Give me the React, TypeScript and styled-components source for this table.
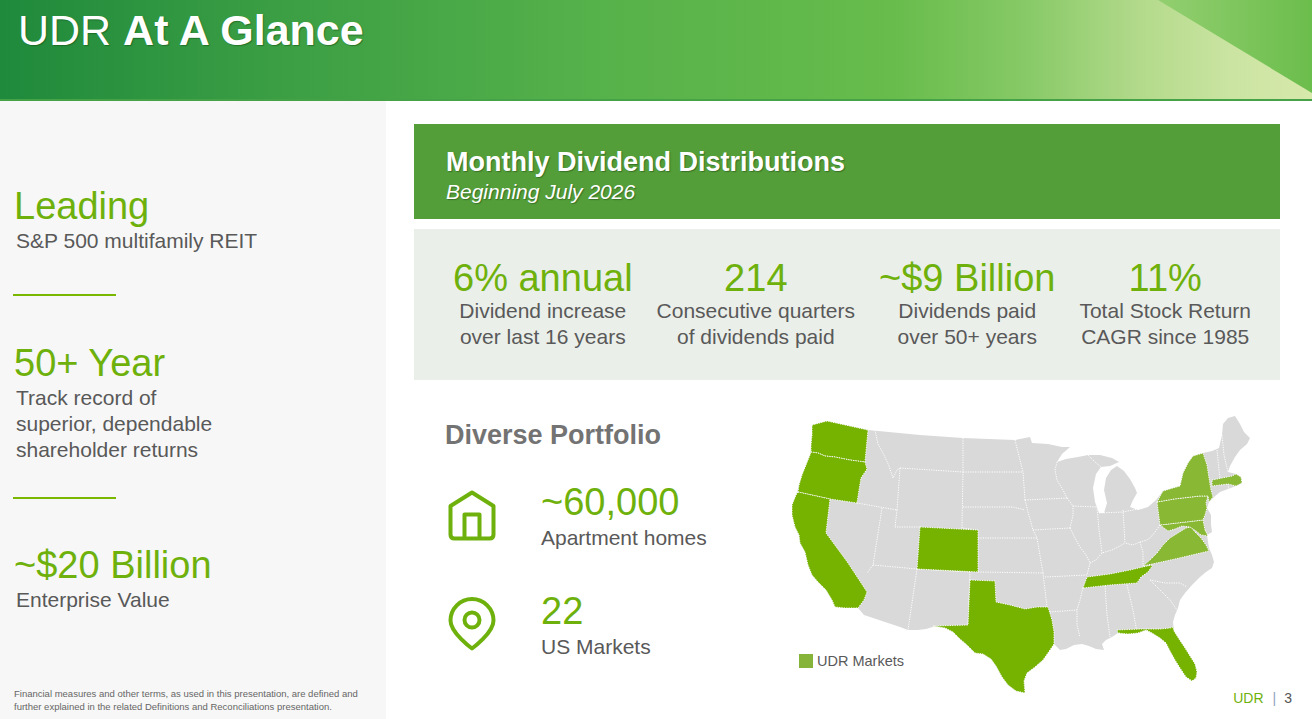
import React from "react";
import styled, { createGlobalStyle } from "styled-components";

const GlobalStyle = createGlobalStyle`
  html, body {
    margin: 0;
    padding: 0;
    background: #ffffff;
  }
  body {
    font-family: "Liberation Sans", Arial, sans-serif;
  }
`;

const GREEN = "#6fb10c";
const GRAY = "#595959";

const stats = [
  { value: "6% annual", lines: ["Dividend increase", "over last 16 years"] },
  { value: "214", lines: ["Consecutive quarters", "of dividends paid"] },
  { value: "~$9 Billion", lines: ["Dividends paid", "over 50+ years"] },
  { value: "11%", lines: ["Total Stock Return", "CAGR since 1985"] },
];

// rough outline of the lower 48, screen coords
const US_OUTLINE =
  "812,425 827,421 868,430 920,435 963,438 1015,440 1030,437 1032,443 1048,444 1062,447 1070,447 1062,454 1057,462 1066,459 1078,457 1088,455 1100,455 1112,458 1119,462 1110,466 1101,467 1096,474 1093,488 1095,502 1099,513 1104,513 1107,503 1104,490 1106,478 1111,470 1117,466 1124,471 1130,479 1135,488 1137,493 1133,500 1130,507 1138,510 1148,507 1156,500 1163,491 1173,488 1180,486 1183,473 1188,463 1193,456 1203,453 1212,451 1219,448 1222,435 1223,424 1228,418 1235,416 1240,424 1244,432 1250,438 1247,444 1240,450 1235,457 1230,466 1228,472 1236,474 1241,477 1242,483 1236,486 1228,489 1220,492 1214,497 1209,502 1207,508 1211,515 1211,525 1212,532 1207,535 1208,542 1209,548 1212,555 1214,562 1212,568 1206,572 1200,577 1192,585 1185,593 1180,600 1178,608 1175,615 1173,622 1174,631 1179,639 1185,648 1190,656 1195,664 1197,672 1196,678 1192,681 1186,677 1180,668 1175,660 1170,651 1166,643 1160,638 1152,633 1146,630 1138,633 1128,634 1118,633 1112,637 1106,640 1102,644 1104,650 1096,649 1089,646 1082,644 1074,645 1066,649 1060,650 1054,644 1050,650 1043,660 1035,667 1027,673 1024,681 1025,693 1016,691 1008,685 1002,677 996,666 991,659 983,654 975,653 967,645 960,639 953,632 945,628 936,626 926,629 918,630 908,630 900,627 888,623 876,619 864,615 858,608 845,608 835,607 832,600 826,590 818,582 812,575 808,565 805,552 800,543 799,535 795,527 792,515 792,505 796,495 799,485 802,475 806,465 810,455 811,445 812,435";

const MARKETS_DARK = [
  // WA
  "812,425 827,421 868,430 865,462 850,460 835,457 825,456 818,453 811,452 811,445 812,435",
  // OR
  "811,452 818,453 825,456 835,457 850,460 865,462 867,469 861,478 859,490 857,503 830,499 798,492 799,485 802,475 806,465 810,455",
  // CA
  "798,492 830,499 826,533 848,563 867,592 864,600 858,608 845,608 835,607 832,600 826,590 818,582 812,575 808,565 805,552 800,543 799,535 795,527 792,515 792,505 796,495",
  // CO
  "920,527 978,530 978,572 917,569",
  // TX
  "970,580 995,581 996,602 1010,605 1025,609 1037,607 1048,607 1052,620 1054,632 1054,644 1050,650 1043,660 1035,667 1027,673 1024,681 1025,693 1016,691 1008,685 1002,677 996,666 991,659 983,654 975,653 967,645 960,639 953,632 945,628 933,626 968,625",
  // TN
  "1083,588 1087,577 1110,574 1130,570 1147,566 1153,565 1148,572 1141,577 1137,583 1110,585",
  // FL
  "1117,630 1140,629 1160,629 1170,628 1173,627 1174,631 1179,639 1185,648 1190,656 1195,664 1197,672 1196,678 1192,681 1186,677 1180,668 1175,660 1170,651 1166,643 1160,638 1152,633 1146,630 1138,633 1128,634 1118,633",
];

const MARKETS_LIGHT = [
  // VA
  "1143,566 1150,560 1157,553 1163,545 1170,538 1178,533 1186,528 1191,527 1195,532 1201,538 1206,545 1209,551 1175,559",
  // MD
  "1160,525 1203,520 1205,530 1208,536 1201,535 1196,531 1190,527 1182,526 1175,529 1168,531",
  // PA
  "1157,502 1174,499 1200,496 1208,496 1206,503 1207,508 1205,515 1203,520 1160,525",
  // NY
  "1157,502 1163,491 1173,488 1180,486 1183,473 1188,463 1193,456 1203,453 1207,465 1209,478 1211,490 1213,497 1209,502 1208,496 1200,496 1174,499",
  // MA
  "1212,480 1232,476 1236,474 1241,477 1242,483 1236,486 1228,484 1212,486",
];

const BORDERS = [
  "875,430 878,444 884,455 889,466 893,478 897,470 900,468",
  "900,468 963,472",
  "900,468 897,510",
  "857,503 897,510",
  "882,508 873,565 867,573",
  "897,510 895,527 920,527",
  "963,438 963,472 962,528 978,530",
  "873,565 917,569",
  "917,569 908,630",
  "917,569 970,572 968,625",
  "978,572 1043,573",
  "1043,573 1047,607",
  "978,538 1037,538",
  "1033,530 1037,538 1043,573",
  "963,507 1013,507 1025,510",
  "1025,500 1028,512 1033,530",
  "963,472 1023,472",
  "1015,440 1020,460 1023,472 1025,500",
  "1025,500 1067,498",
  "1057,462 1055,470 1057,480 1063,490 1067,498",
  "1088,455 1095,462 1101,467",
  "1033,530 1070,528",
  "1067,498 1073,506 1073,515 1070,528",
  "1073,506 1097,507",
  "1070,528 1075,538 1080,547 1086,555 1090,563 1087,575",
  "1045,577 1087,575",
  "1050,612 1077,610",
  "1083,588 1080,600 1077,610 1077,625 1080,637",
  "1105,586 1107,615 1110,637",
  "1127,585 1133,610 1137,633",
  "1150,580 1160,590 1170,600 1177,610",
  "1150,580 1165,583 1180,583 1187,587",
  "1097,507 1099,530 1102,553",
  "1090,563 1096,560 1102,553 1112,550 1120,546 1125,543",
  "1123,510 1125,543",
  "1099,513 1123,512 1143,508",
  "1160,525 1155,532 1150,538 1147,540 1140,542 1133,545 1125,543",
  "1140,542 1143,552 1143,565",
  "1205,530 1208,536",
  "1217,450 1219,470 1220,478",
  "1222,435 1224,455 1228,472",
  "1228,484 1229,492",
];

const UsMap: React.FC = () => (
  <MapSvg viewBox="785 410 475 290" width="475" height="290">
    <polygon points={US_OUTLINE} fill="#d9d9d9" />
    <g fill="none" stroke="#ffffff" strokeWidth="1" strokeDasharray="1.2 1.2">
      {BORDERS.map((b, i) => (
        <polyline key={i} points={b} />
      ))}
    </g>
    <g stroke="#ffffff" strokeWidth="1" strokeDasharray="1.2 1.2" strokeLinejoin="round">
      {MARKETS_DARK.map((p, i) => (
        <polygon key={i} points={p} fill="#75b300" />
      ))}
      {MARKETS_LIGHT.map((p, i) => (
        <polygon key={i} points={p} fill="#89b834" />
      ))}
    </g>
  </MapSvg>
);

const HouseIcon: React.FC = () => (
  <svg width="48" height="51" viewBox="0 0 48 51" fill="none" stroke={GREEN} strokeWidth="4" strokeLinejoin="round">
    <path d="M2.5 16 L24 2.5 L45.5 16 V44.5 Q45.5 48.5 41.5 48.5 H6.5 Q2.5 48.5 2.5 44.5 Z" />
    <path d="M16.5 48.5 V24.5 H31.5 V48.5" />
  </svg>
);

const PinIcon: React.FC = () => (
  <svg width="48" height="54" viewBox="0 0 48 54" fill="none" stroke={GREEN} strokeWidth="4" strokeLinejoin="round">
    <path d="M24 51.5 C24 51.5 2.5 36 2.5 23.5 A21.5 21.5 0 0 1 45.5 23.5 C45.5 36 24 51.5 24 51.5 Z" />
    <circle cx="24" cy="23" r="7.5" />
  </svg>
);

const App: React.FC = () => {
  return (
    <Slide>
      <GlobalStyle />
      <Header>
        <Title>
          UDR <strong>At A Glance</strong>
        </Title>
      </Header>
      <Body>
        <Sidebar>
          <Highlight $top={83}>
            <SideFigure>Leading</SideFigure>
            <SideCaption>S&amp;P 500 multifamily REIT</SideCaption>
          </Highlight>
          <Rule $top={40} />
          <Highlight $top={45}>
            <SideFigure>50+ Year</SideFigure>
            <SideCaption>
              Track record of
              <br />
              superior, dependable
              <br />
              shareholder returns
            </SideCaption>
          </Highlight>
          <Rule $top={34} />
          <Highlight $top={44}>
            <SideFigure>~$20 Billion</SideFigure>
            <SideCaption>Enterprise Value</SideCaption>
          </Highlight>
          <Disclaimer>
            Financial measures and other terms, as used in this presentation, are defined and
            <br />
            further explained in the related Definitions and Reconciliations presentation.
          </Disclaimer>
        </Sidebar>
        <Main>
          <Banner>
            <BannerTitle>Monthly Dividend Distributions</BannerTitle>
            <BannerSub>Beginning July 2026</BannerSub>
          </Banner>
          <StatsBox>
            {stats.map((s) => (
              <Stat key={s.value}>
                <Figure>{s.value}</Figure>
                <StatLabel>
                  {s.lines[0]}
                  <br />
                  {s.lines[1]}
                </StatLabel>
              </Stat>
            ))}
          </StatsBox>
          <Lower>
            <Portfolio>
              <SectionTitle>Diverse Portfolio</SectionTitle>
              <FactRow $top={31}>
                <IconCell>
                  <HouseIcon />
                </IconCell>
                <div>
                  <Figure>~60,000</Figure>
                  <FactLabel>Apartment homes</FactLabel>
                </div>
              </FactRow>
              <FactRow $top={39}>
                <IconCell>
                  <PinIcon />
                </IconCell>
                <div>
                  <Figure>22</Figure>
                  <FactLabel>US Markets</FactLabel>
                </div>
              </FactRow>
            </Portfolio>
            <MapWrap>
              <UsMap />
              <Legend>
                <Swatch />
                <span>UDR Markets</span>
              </Legend>
            </MapWrap>
          </Lower>
        </Main>
      </Body>
      <PageTag>
        <PageBrand>UDR</PageBrand>
        <PageBar>|</PageBar>
        <span>3</span>
      </PageTag>
    </Slide>
  );
};

const Slide = styled.div`
  position: relative;
  width: 1312px;
  height: 719px;
  overflow: hidden;
  background: #ffffff;
  display: flex;
  flex-direction: column;
`;

const Header = styled.header`
  position: relative;
  height: 99px;
  flex: none;
  border-bottom: 2px solid #45a246;
  background: linear-gradient(
    90deg,
    #1f8a3c 0%,
    #3c9f44 22%,
    #55b14a 45%,
    #67bc4b 68%,
    #86c966 78%,
    #b3da8b 87%,
    #cbe4a2 94%,
    #d7e9ab 100%
  );

  &::after {
    content: "";
    position: absolute;
    top: 0;
    right: 0;
    width: 154px;
    height: 93px;
    background: linear-gradient(90deg, #93cf70 0%, #6bbd4c 100%);
    clip-path: polygon(0 0, 100% 0, 100% 100%);
  }
`;

const Title = styled.h1`
  margin: 0;
  padding: 5px 0 0 18px;
  font-size: 43px;
  line-height: 50px;
  font-weight: 400;
  color: #ffffff;
  text-shadow: 1px 1px 1px rgba(20, 80, 20, 0.55);

  strong {
    font-weight: 700;
  }
`;

const Body = styled.div`
  flex: 1;
  display: flex;
  min-height: 0;
`;

const Sidebar = styled.aside`
  width: 386px;
  flex: none;
  background: #f7f7f7;
  display: flex;
  flex-direction: column;
  padding-left: 14px;
  box-sizing: border-box;
`;

const Highlight = styled.div<{ $top: number }>`
  margin-top: ${(p) => p.$top}px;
`;

const SideFigure = styled.div`
  font-size: 38px;
  line-height: 44px;
  color: ${GREEN};
`;

const SideCaption = styled.div`
  font-size: 21px;
  line-height: 26px;
  color: ${GRAY};
  padding-left: 2px;
`;

const Rule = styled.div<{ $top: number }>`
  margin-top: ${(p) => p.$top}px;
  margin-left: -1px;
  width: 103px;
  height: 2px;
  background: #7ab800;
`;

const Disclaimer = styled.p`
  margin: auto 0 0;
  padding-bottom: 6px;
  font-size: 9.5px;
  line-height: 13px;
  color: #666666;
`;

const Main = styled.main`
  flex: 1;
  display: flex;
  flex-direction: column;
  padding: 23px 32px 0 28px;
  min-width: 0;
`;

const Banner = styled.section`
  height: 95px;
  box-sizing: border-box;
  padding: 23px 0 0 32px;
  background: #539e39;
  color: #ffffff;
  text-shadow: 1px 1px 1px rgba(30, 70, 20, 0.5);
`;

const BannerTitle = styled.h2`
  margin: 0;
  font-size: 27px;
  line-height: 30px;
  font-weight: 700;
`;

const BannerSub = styled.div`
  margin-top: 2px;
  font-size: 21px;
  line-height: 26px;
  font-style: italic;
`;

const StatsBox = styled.section`
  margin-top: 10px;
  height: 151px;
  box-sizing: border-box;
  background: #ebefea;
  display: flex;
  gap: 24px;
  padding: 28px 0 0 39px;
`;

const Stat = styled.div`
  text-align: center;
`;

const Figure = styled.div`
  font-size: 38px;
  line-height: 42px;
  color: ${GREEN};
  white-space: nowrap;
`;

const StatLabel = styled.div`
  margin-top: -1px;
  font-size: 21px;
  line-height: 25.5px;
  color: ${GRAY};
  white-space: nowrap;
`;

const Lower = styled.section`
  flex: 1;
  display: flex;
`;

const Portfolio = styled.div`
  width: 371px;
  flex: none;
  box-sizing: border-box;
  padding: 40px 0 0 31px;
`;

const SectionTitle = styled.h3`
  margin: 0;
  font-size: 27px;
  line-height: 30px;
  font-weight: 700;
  color: #737373;
`;

const FactRow = styled.div<{ $top: number }>`
  margin-top: ${(p) => p.$top}px;
  display: flex;
  align-items: center;
`;

const IconCell = styled.div`
  width: 96px;
  flex: none;
  padding-left: 3px;
  box-sizing: border-box;
  display: flex;
  align-items: center;

  svg {
    display: block;
  }
`;

const FactLabel = styled.div`
  margin-top: 2px;
  font-size: 21px;
  line-height: 25.5px;
  color: ${GRAY};
`;

const MapWrap = styled.div`
  position: relative;
  margin-top: 30px;
  width: 475px;
  height: 290px;
`;

const MapSvg = styled.svg`
  display: block;
`;

const Legend = styled.div`
  position: absolute;
  left: 14px;
  top: 243px;
  display: flex;
  align-items: center;
  gap: 4px;
  font-size: 14.5px;
  line-height: 16px;
  color: ${GRAY};
`;

const Swatch = styled.span`
  width: 14px;
  height: 14px;
  background: #86b43b;
`;

const PageTag = styled.div`
  position: absolute;
  right: 20px;
  bottom: 13px;
  display: flex;
  align-items: baseline;
  font-size: 14px;
  line-height: 16px;
  color: #555555;
`;

const PageBrand = styled.span`
  color: ${GREEN};
`;

const PageBar = styled.span`
  margin: 0 8px 0 9px;
  color: #8fa3c2;
`;

export default App;
